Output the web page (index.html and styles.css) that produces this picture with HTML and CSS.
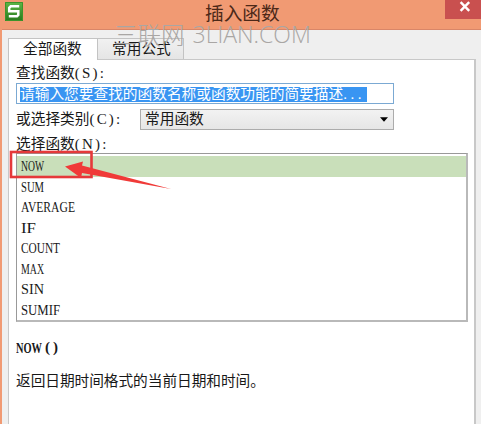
FILE: index.html
```html
<!DOCTYPE html>
<html lang="zh-CN">
<head>
<meta charset="utf-8">
<title>插入函数</title>
<link rel="stylesheet" href="styles.css">
</head>
<body>
<div class="window">
  <header class="titlebar">
    <svg class="app-icon" width="18" height="19" viewBox="0 0 18 19">
      <defs><linearGradient id="g" x2="0" y2="1"><stop stop-color="#5eb747"/><stop offset="1" stop-color="#28791c"/></linearGradient></defs>
      <rect width="18" height="19" fill="url(#g)"/>
      <path d="M0.5 0.5h17v18h-17z" fill="none" stroke="#3d932b"/>
      <path d="M14.2 4.3H5.7L4.2 5.8V9.2H13.3V13L12 14.3H3.8" fill="none" stroke="#fff" stroke-width="2.5"/>
    </svg>
    <h1 class="title">插入函数</h1>
    <div class="close">
      <svg width="12" height="11" viewBox="0 0 12 11"><path d="M1.6 1.2L10.2 9.8M10.2 1.2L1.6 9.8" stroke="#fff" stroke-width="2.4"/></svg>
    </div>
  </header>
  <div class="client">
    <nav class="tabs">
      <div class="tab active">全部函数</div>
      <div class="tab">常用公式</div>
    </nav>
    <main class="panel">
      <div class="label search-label">查找函数<span class="lat">(S):</span></div>
      <div class="search"><span class="selected">请输入您要查找的函数名称或函数功能的简要描述<span class="lat dots">...</span></span></div>
      <div class="category">
        <div class="label">或选择类别<span class="lat">(C):</span></div>
        <div class="select"><span>常用函数</span><svg width="8" height="5" viewBox="0 0 8 5"><path d="M0 0.3h8L4 4.8z"/></svg></div>
      </div>
      <div class="label list-label">选择函数<span class="lat">(N):</span></div>
      <div class="list">
        <div class="row current"><svg class="name" width="70" height="20"><text y="15" textLength="23" lengthAdjust="spacingAndGlyphs">NOW</text></svg></div>
        <div class="row"><svg class="name" width="70" height="20"><text y="15" textLength="23" lengthAdjust="spacingAndGlyphs">SUM</text></svg></div>
        <div class="row"><svg class="name" width="70" height="20"><text y="15" textLength="54" lengthAdjust="spacingAndGlyphs">AVERAGE</text></svg></div>
        <div class="row"><svg class="name" width="70" height="20"><text y="15" textLength="15" lengthAdjust="spacingAndGlyphs">IF</text></svg></div>
        <div class="row"><svg class="name" width="70" height="20"><text y="15" textLength="39" lengthAdjust="spacingAndGlyphs">COUNT</text></svg></div>
        <div class="row"><svg class="name" width="70" height="20"><text y="15" textLength="23" lengthAdjust="spacingAndGlyphs">MAX</text></svg></div>
        <div class="row"><svg class="name" width="70" height="20"><text y="15" textLength="23" lengthAdjust="spacingAndGlyphs">SIN</text></svg></div>
        <div class="row"><svg class="name" width="70" height="20"><text y="15" textLength="39" lengthAdjust="spacingAndGlyphs">SUMIF</text></svg></div>
      </div>
      <div class="signature"><svg class="name" width="70" height="20"><text y="15" textLength="26" lengthAdjust="spacingAndGlyphs">NOW</text><text x="29" y="14" textLength="13">()</text></svg></div>
      <div class="description">返回日期时间格式的当前日期和时间。</div>
    </main>
  </div>
  <div class="watermark"><span class="mark-cn">三联网</span><span class="mark-en">3LIAN.COM</span></div>
  <svg class="annotation" width="164" height="44" viewBox="0 0 164 44">
    <rect x="3" y="5" width="80.5" height="25" fill="none" stroke="#e5393a" stroke-width="2.6"/>
    <path d="M57 19.5L75 14.5L74 18.5L163 42L74 26L73 31Z" fill="#f03a38"/>
  </svg>
</div>
</body>
</html>
```
FILE: styles.css
```css
* { box-sizing: border-box; }
body {
  margin: 0;
  overflow: hidden;
  font: 14.7px/20px "Noto Sans CJK SC", sans-serif;
  color: #181818;
}
.window {
  position: relative;
  width: 481px;
  height: 424px;
  overflow: hidden;
  background: #f19a73;
}
.titlebar {
  display: flex;
  height: 29px;
  padding-left: 5px;
}
.app-icon { margin-top: 2px; }
.title {
  flex: 1;
  margin: 0 0 0 182px;
  font-size: 18.7px;
  line-height: 23px;
  font-weight: 400;
  color: #4c2818;
}
.close {
  width: 36px;
  height: 19px;
  padding: 1px 0 0 14px;
  line-height: 0;
  background: #c9504f;
}
.client {
  height: 395px;
  margin-left: 2px;
  padding: 8px 5px 0 6px;
  background: #efefef;
  border-top: 1px solid #d98668;
}
.tabs { display: flex; height: 21px; align-items: flex-end; }
.tab {
  position: relative;
  width: 86px;
  height: 21px;
  padding-left: 14px;
  line-height: 18px;
  white-space: nowrap;
  border: 1px solid #c3c3c3;
  border-left: 0;
  border-bottom: 0;
  background: linear-gradient(#f1f1f1, #e5e5e5);
}
.tab.active {
  width: 90px;
  height: 22px;
  margin-bottom: -1px;
  padding-left: 14px;
  border-left: 1px solid #c3c3c3;
  background: #fff;
  z-index: 1;
}
.panel {
  width: 468px;
  height: 370px;
  padding: 3px 7px 0 7px;
  border: 1px solid #c8c8c8;
  border-width: 1px 2px 0 1px;
  background: #fff;
}
.label { white-space: nowrap; }
.lat {
  font-family: "Liberation Serif", serif;
  font-size: 15px;
  letter-spacing: 2.2px;
}
.dots { letter-spacing: 3.6px; }
.search-label { height: 20px; line-height: 18px; }
.search {
  width: 378px;
  height: 21px;
  padding: 3px 0 0 3px;
  border: 1px solid #7ba9d3;
}
.selected {
  display: block;
  width: 347px;
  height: 15px;
  line-height: 12px;
  color: #fff;
  white-space: nowrap;
  background: #3995f2;
}
.category { display: flex; height: 26px; padding-top: 5px; }
.category .label { width: 124px; line-height: 18px; }
.select {
  display: flex;
  width: 254px;
  height: 21px;
  padding: 0 5px 0 4px;
  align-items: center;
  justify-content: space-between;
  line-height: 18px;
  border: 1px solid #acacac;
  background: linear-gradient(#f2f2f2, #e6e6e6);
}
.select span { padding-bottom: 3px; }
.list-label { height: 23px; padding-top: 3px; line-height: 20px; }
.list {
  width: 452px;
  height: 169px;
  padding-top: 2px;
  border: 1px solid #999;
  border-right: 2px solid #b9b9b9;
  border-bottom: 2px solid #b9b9b9;
}
.row {
  height: 20.5px;
  padding-left: 4px;
  line-height: 0;
}
.name {
  font: 15px "Liberation Serif", serif;
  fill: #181818;
}
.current { background: #c9dfba; }
.signature { height: 20px; margin-top: 16px; line-height: 0; }
.signature .name { font-weight: bold; }
.description { margin-top: 11px; line-height: 22px; letter-spacing: -0.05px; }
.watermark {
  position: absolute;
  left: 114px;
  top: 17px;
  display: flex;
  gap: 8px;
  color: #a9a6a4;
  font-weight: 300;
  line-height: 34px;
  white-space: nowrap;
  z-index: 2;
}
.mark-cn { font-size: 23.5px; }
.mark-en { font-family: "Open Sans", sans-serif; font-size: 23px; }
.annotation { position: absolute; left: 8px; top: 147px; z-index: 3; }
```
